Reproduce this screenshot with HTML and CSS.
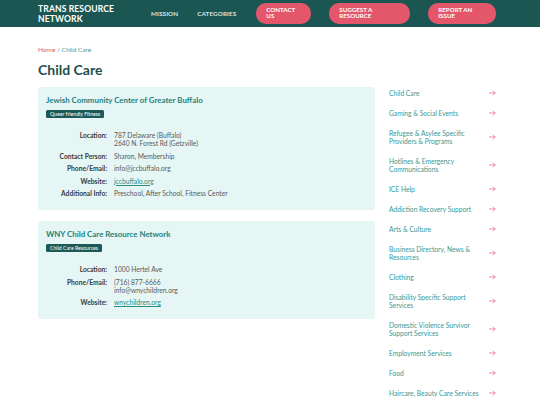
FILE: index.html
```html
<!DOCTYPE html>
<html lang="en">
<head>
<meta charset="utf-8">
<title>Child Care - Trans Resource Network</title>
<link rel="stylesheet" href="styles.css">
</head>
<body>
<header class="topbar">
  <div class="brand">TRANS RESOURCE<br>NETWORK</div>
  <nav class="nav">
    <a class="nav-link" href="#">MISSION</a>
    <a class="nav-link" href="#">CATEGORIES</a>
  </nav>
  <div class="actions">
    <a class="btn btn-contact" href="#">CONTACT<br>US</a>
    <a class="btn btn-suggest" href="#">SUGGEST A<br>RESOURCE</a>
    <a class="btn btn-report" href="#">REPORT AN<br>ISSUE</a>
  </div>
</header>

<div class="page">
  <div class="crumbs"><a class="crumb-home" href="#">Home</a> / Child Care</div>
  <h1 class="page-title">Child Care</h1>

  <div class="layout">
    <main class="results">
      <section class="card">
        <h2 class="card-title">Jewish Community Center of Greater Buffalo</h2>
        <span class="badge">Queer friendly Fitness</span>
        <dl class="details">
          <dt>Location:</dt>
          <dd>787 Delaware (Buffalo)<br>2640 N. Forest Rd (Getzville)</dd>
          <dt>Contact Person:</dt>
          <dd>Sharon, Membership</dd>
          <dt>Phone/Email:</dt>
          <dd>info@jccbuffalo.org</dd>
          <dt>Website:</dt>
          <dd><a class="link" href="#">jccbuffalo.org</a></dd>
          <dt>Additional Info:</dt>
          <dd>Preschool, After School, Fitness Center</dd>
        </dl>
      </section>

      <section class="card">
        <h2 class="card-title">WNY Child Care Resource Network</h2>
        <span class="badge">Child Care Resources</span>
        <dl class="details">
          <dt>Location:</dt>
          <dd>1000 Hertel Ave</dd>
          <dt>Phone/Email:</dt>
          <dd>(716) 877-6666<br>info@wnychildren.org</dd>
          <dt>Website:</dt>
          <dd><a class="link" href="#">wnychildren.org</a></dd>
        </dl>
      </section>
    </main>

    <aside class="sidebar">
      <ul class="cat-list">
        <li class="cat"><span class="cat-name">Child Care</span><svg class="arrow" viewBox="0 0 8 6"><path d="M0.5 3H7M4.5 0.6L7 3L4.5 5.4"/></svg></li>
        <li class="cat"><span class="cat-name">Gaming &amp; Social Events</span><svg class="arrow" viewBox="0 0 8 6"><path d="M0.5 3H7M4.5 0.6L7 3L4.5 5.4"/></svg></li>
        <li class="cat"><span class="cat-name">Refugee &amp; Asylee Specific Providers &amp; Programs</span><svg class="arrow" viewBox="0 0 8 6"><path d="M0.5 3H7M4.5 0.6L7 3L4.5 5.4"/></svg></li>
        <li class="cat"><span class="cat-name">Hotlines &amp; Emergency Communications</span><svg class="arrow" viewBox="0 0 8 6"><path d="M0.5 3H7M4.5 0.6L7 3L4.5 5.4"/></svg></li>
        <li class="cat"><span class="cat-name">ICE Help</span><svg class="arrow" viewBox="0 0 8 6"><path d="M0.5 3H7M4.5 0.6L7 3L4.5 5.4"/></svg></li>
        <li class="cat"><span class="cat-name">Addiction Recovery Support</span><svg class="arrow" viewBox="0 0 8 6"><path d="M0.5 3H7M4.5 0.6L7 3L4.5 5.4"/></svg></li>
        <li class="cat"><span class="cat-name">Arts &amp; Culture</span><svg class="arrow" viewBox="0 0 8 6"><path d="M0.5 3H7M4.5 0.6L7 3L4.5 5.4"/></svg></li>
        <li class="cat"><span class="cat-name">Business Directory, News &amp; Resources</span><svg class="arrow" viewBox="0 0 8 6"><path d="M0.5 3H7M4.5 0.6L7 3L4.5 5.4"/></svg></li>
        <li class="cat"><span class="cat-name">Clothing</span><svg class="arrow" viewBox="0 0 8 6"><path d="M0.5 3H7M4.5 0.6L7 3L4.5 5.4"/></svg></li>
        <li class="cat"><span class="cat-name">Disability Specific Support Services</span><svg class="arrow" viewBox="0 0 8 6"><path d="M0.5 3H7M4.5 0.6L7 3L4.5 5.4"/></svg></li>
        <li class="cat"><span class="cat-name">Domestic Violence Survivor Support Services</span><svg class="arrow" viewBox="0 0 8 6"><path d="M0.5 3H7M4.5 0.6L7 3L4.5 5.4"/></svg></li>
        <li class="cat"><span class="cat-name">Employment Services</span><svg class="arrow" viewBox="0 0 8 6"><path d="M0.5 3H7M4.5 0.6L7 3L4.5 5.4"/></svg></li>
        <li class="cat"><span class="cat-name">Food</span><svg class="arrow" viewBox="0 0 8 6"><path d="M0.5 3H7M4.5 0.6L7 3L4.5 5.4"/></svg></li>
        <li class="cat"><span class="cat-name">Haircare, Beauty Care Services</span><svg class="arrow" viewBox="0 0 8 6"><path d="M0.5 3H7M4.5 0.6L7 3L4.5 5.4"/></svg></li>
      </ul>
    </aside>
  </div>
</div>
</body>
</html>
```

FILE: styles.css
```css
* { box-sizing: border-box; }

html, body {
  margin: 0;
  padding: 0;
  background: #ffffff;
  font-family: Lato, "Open Sans", "Liberation Sans", sans-serif;
  color: #444;
  overflow: hidden;
}

a { text-decoration: none; color: inherit; }

/* Header */
.topbar {
  height: 27px;
  background: #1b5653;
  display: flex;
  align-items: center;
  padding-left: 38px;
}

.brand {
  color: #ffffff;
  font-weight: 700;
  font-size: 8.6px;
  line-height: 10px;
  letter-spacing: 0.1px;
  white-space: nowrap;
  width: 76px;
}

.nav {
  display: flex;
  gap: 19px;
  margin-left: 37px;
}

.nav-link {
  color: #d6e5e4;
  font-weight: 700;
  font-size: 6.3px;
  letter-spacing: 0.1px;
}

.actions {
  display: flex;
  gap: 18px;
  margin-left: 20px;
}

.btn {
  display: block;
  height: 21px;
  padding: 4px 0 0 10px;
  background: #e4576a;
  color: #ffffff;
  border-radius: 10px;
  font-weight: 700;
  font-size: 6.2px;
  line-height: 6px;
}

.btn-contact { width: 55px; }
.btn-suggest { width: 81px; }
.btn-report { width: 68px; }

/* Page */
.page {
  padding: 19px 0 0 38px;
}

.crumbs {
  font-size: 6.5px;
  line-height: 8px;
  color: #4a9b97;
}

.crumb-home { color: #e4576a; }

.page-title {
  margin: 8px 0 0;
  font-size: 14px;
  line-height: 16px;
  font-weight: 700;
  color: #1e4f4d;
}

.layout {
  display: grid;
  grid-template-columns: 337px 108px;
  column-gap: 14px;
  margin-top: 9px;
  align-items: start;
}

.results {
  display: flex;
  flex-direction: column;
  gap: 11px;
}

.card {
  background: #e6f6f5;
  border-radius: 3px;
  padding: 9px 8px 13px;
  font-size: 6px;
  line-height: 8px;
}

.card-title {
  margin: 0;
  font-size: 7.9px;
  line-height: 9px;
  font-weight: 700;
  color: #25817d;
}

.badge {
  display: block;
  width: fit-content;
  margin-top: 5px;
  height: 8px;
  padding: 0 4px;
  background: #1d5956;
  color: #ffffff;
  border-radius: 1.5px;
  font-size: 5.2px;
  line-height: 8px;
}

.details {
  display: grid;
  grid-template-columns: 61px 1fr;
  column-gap: 7px;
  row-gap: 4.5px;
  margin: 13px 0 0;
  font-size: 6.7px;
  line-height: 8px;
}

.details dt {
  text-align: right;
  font-weight: 700;
  color: #3a3a3a;
}

.details dd {
  margin: 0;
  color: #5a5a5a;
}

.link {
  color: #2a8c87;
  text-decoration: underline;
}

/* Sidebar */
.cat-list {
  list-style: none;
  margin: -4px 0 0;
  padding: 0;
}

.cat {
  display: flex;
  align-items: center;
  justify-content: space-between;
  padding: 6px 0;
  width: 108px;
}

.cat-name {
  width: 94px;
  font-size: 6.7px;
  line-height: 8px;
  color: #3a9893;
}

.arrow {
  width: 7px;
  height: 6px;
  margin-right: 1px;
  fill: none;
  stroke: #e4607a;
  stroke-width: 0.8;
  stroke-linecap: round;
  stroke-linejoin: round;
}
```
